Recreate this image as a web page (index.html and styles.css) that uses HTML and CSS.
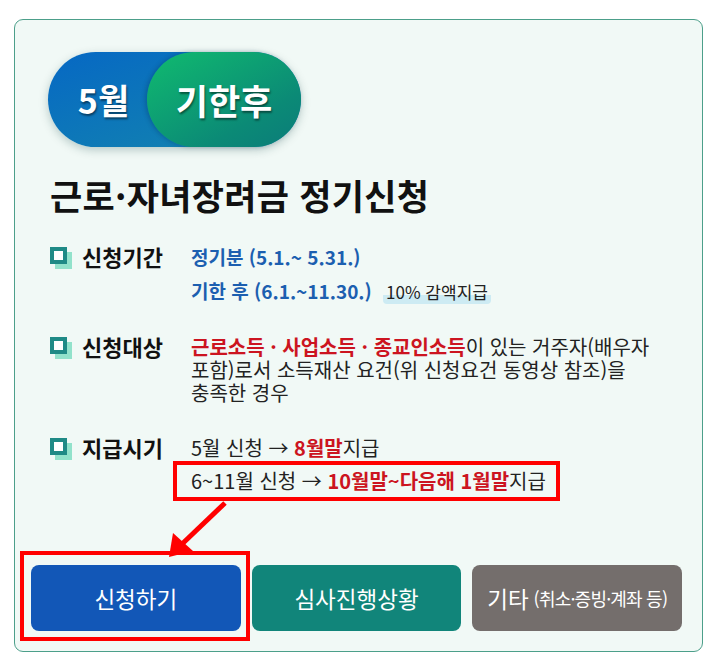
FILE: index.html
```html
<!DOCTYPE html>
<html lang="ko">
<head>
  <meta charset="UTF-8">
  <meta name="viewport" content="width=device-width, initial-scale=1.0">
  <title>근로·자녀장려금 정기신청</title>
  <link rel="stylesheet" href="styles.css">
</head>
<body>
  <div class="card">
    <div class="badge">
      <span class="badge-month">5월</span>
      <span class="badge-late">기한후</span>
    </div>

    <h1>근로·자녀장려금 정기신청</h1>

    <div class="info">
      <div class="row">
        <span class="bullet"></span>
        <span class="label">신청기간</span>
        <div class="value">
          <div class="blue">정기분 (5.1.~ 5.31.)</div>
          <div class="blue line-gap">기한 후 (6.1.~11.30.) <span class="note">10% 감액지급</span></div>
        </div>
      </div>

      <div class="row">
        <span class="bullet"></span>
        <span class="label">신청대상</span>
        <div class="value">
          <span class="red">근로소득 · 사업소득 · 종교인소득</span>이 있는 거주자(배우자 포함)로서 소득재산 요건(위 신청요건 동영상 참조)을 충족한 경우
        </div>
      </div>

      <div class="row">
        <span class="bullet"></span>
        <span class="label">지급시기</span>
        <div class="value">
          <div>5월 신청 → <span class="red">8월말</span>지급</div>
          <div class="mark-box">6~11월 신청 → <span class="red">10월말~다음해 1월말</span>지급</div>
        </div>
      </div>

      <svg class="arrow" width="70" height="60" viewBox="0 0 70 60">
        <line x1="62" y1="2" x2="18" y2="44" stroke="#ff0000" stroke-width="5"/>
        <polygon points="6,56 10,32 30,50" fill="#ff0000"/>
      </svg>
    </div>

    <div class="buttons">
      <a class="btn btn-apply" href="#">신청하기<span class="mark-outline"></span></a>
      <a class="btn btn-status" href="#">심사진행상황</a>
      <a class="btn btn-etc" href="#">기타 <small>(취소·증빙·계좌 등)</small></a>
    </div>
  </div>
</body>
</html>
```

FILE: styles.css
```css
body {
  margin: 0;
  padding: 19px 15px 0 14px;
  background-color: #ffffff;
  font-family: "Noto Sans CJK KR", "Noto Sans", sans-serif;
  color: #222;
}
.card {
  border: 1px solid #4c9f8a;
  border-radius: 9px;
  background-color: #f1f9f6;
  padding: 32px 20px 20px 16px;
}
.badge {
  display: flex;
  width: 253px;
  height: 95px;
  margin-left: 17px;
  border-radius: 48px;
  background: linear-gradient(160deg, #0668c4, #1486ad);
  box-shadow: 0 3px 10px rgba(0, 60, 60, 0.25);
}
.badge-month, .badge-late {
  box-sizing: border-box;
  display: flex;
  align-items: center;
  justify-content: center;
  color: #fff;
  font-weight: bold;
  text-shadow: 1px 2px 2px rgba(0, 0, 0, 0.45);
}
.badge-month {
  width: 99px;
  padding-left: 12px;
  font-size: 34px;
}
.badge-late {
  width: 154px;
  font-size: 35px;
  border-radius: 48px;
  background: linear-gradient(150deg, #10bb6f, #0b8a76 70%, #0b7c7a);
  box-shadow: -2px 0 4px rgba(0, 50, 90, 0.3);
}
h1 {
  margin: 28px 0 0 19px;
  font-size: 35px;
  line-height: 40px;
  color: #111;
  letter-spacing: 0.3px;
}
.info {
  position: relative;
  margin: 30px 0 0 19px;
}
.row {
  display: flex;
  align-items: flex-start;
  margin-bottom: 32px;
  font-size: 20px;
  line-height: 23px;
}
.row:last-of-type {
  margin-bottom: 0;
}
.bullet {
  flex: none;
  width: 9px;
  height: 9px;
  margin: 2px 0 0 0;
  border: 4px solid #1f8a86;
  background-color: #fff;
  box-shadow: 5px 5px 0 #92e2cb;
}
.label {
  flex: none;
  width: 109px;
  margin-left: 15px;
  font-size: 22px;
  font-weight: bold;
  color: #111;
}
.value {
  flex: 1;
  padding-right: 8px;
  word-break: keep-all;
}
.blue {
  color: #1c5fb0;
  font-weight: bold;
  font-size: 19px;
}
.line-gap {
  margin-top: 11px;
}
.note {
  margin-left: 6px;
  font-size: 17px;
  font-weight: normal;
  color: #222;
  padding: 0 3px;
  border-radius: 4px;
  background: linear-gradient(transparent 62%, #cdebf3 62%);
}
.red {
  color: #cc1420;
  font-weight: bold;
}
.mark-box {
  display: inline-block;
  margin: 2px 0 0 -18px;
  padding: 4px 10px 5px 14px;
  border: 4px solid #ff0000;
}
.arrow {
  position: absolute;
  left: 113px;
  bottom: -60px;
}
.buttons {
  display: flex;
  gap: 11px;
  margin-top: 64px;
}
.btn {
  position: relative;
  display: flex;
  align-items: center;
  justify-content: center;
  width: 210px;
  height: 66px;
  border-radius: 8px;
  color: #fff;
  font-size: 22.5px;
  text-decoration: none;
}
.btn small {
  font-size: 18px;
  letter-spacing: -0.8px;
  margin-left: 5px;
}
.btn-apply {
  background-color: #1257b7;
}
.btn-status {
  background-color: #11857a;
}
.btn-etc {
  background-color: #746e6c;
}
.mark-outline {
  position: absolute;
  top: -14px;
  left: -11px;
  right: -9px;
  bottom: -10px;
  border: 4px solid #ff0000;
}
```
